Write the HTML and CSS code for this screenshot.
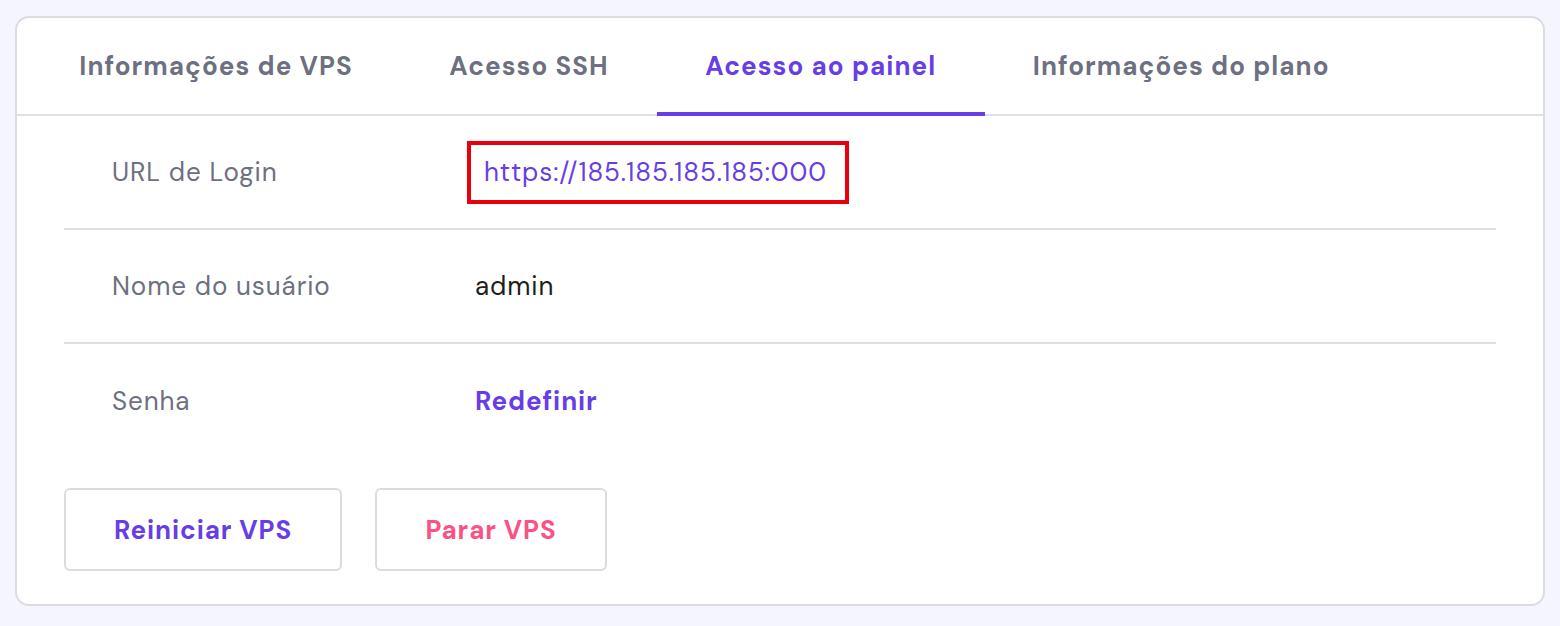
FILE: index.html
```html
<!DOCTYPE html>
<html lang="pt-BR">
<head>
<meta charset="utf-8">
<title>Acesso ao painel</title>
<link rel="stylesheet" href="styles.css">
</head>
<body>
<div class="card">
  <nav class="tabs">
    <div class="tab">Informações de VPS</div>
    <div class="tab">Acesso SSH</div>
    <div class="tab active">Acesso ao painel</div>
    <div class="tab">Informações do plano</div>
  </nav>
  <div class="content">
    <div class="row">
      <div class="label">URL de Login</div>
      <div class="value"><span class="highlight"><a class="link" href="#">https://185.185.185.185:000</a></span></div>
    </div>
    <div class="row">
      <div class="label">Nome do usuário</div>
      <div class="value plain">admin</div>
    </div>
    <div class="row last">
      <div class="label">Senha</div>
      <div class="value"><a class="action-link" href="#">Redefinir</a></div>
    </div>
    <div class="actions">
      <button class="btn btn-restart">Reiniciar VPS</button>
      <button class="btn btn-stop">Parar VPS</button>
    </div>
  </div>
</div>
</body>
</html>
```

FILE: styles.css
```css
* { box-sizing: border-box; }
html, body { margin: 0; }
body {
  background: #f4f5ff;
  padding: 16px 15px 0 15px;
  font-family: "DM Sans", Inter, "Noto Sans", sans-serif;
  -webkit-font-smoothing: antialiased;
}
.card {
  background: #fff;
  border: 2px solid #dcdde3;
  border-radius: 14px;
  height: 590px;
  overflow: hidden;
}
.tabs {
  display: flex;
  padding-left: 14px;
  height: 98px;
  border-bottom: 2px solid #e0e1e6;
}
.tab {
  padding: 0 48.3px;
  display: flex;
  align-items: center;
  font-size: 26px;
  font-weight: 700;
  color: #6d7081;
  letter-spacing: 1.05px;
  position: relative;
  height: 96px;
}
.tab.active {
  color: #673de6;
}
.tab.active::after {
  content: "";
  position: absolute;
  left: 0;
  right: 0;
  bottom: -2px;
  height: 4px;
  background: #673de6;
}
.content {
  padding: 0 47px;
}
.row {
  display: grid;
  grid-template-columns: 363px 1fr;
  align-items: center;
  height: 114px;
  padding-left: 48px;
  border-bottom: 2px solid #dedfe4;
}
.row.last { border-bottom: none; }
.label {
  font-size: 26px;
  letter-spacing: 0.9px;
  color: #6d7081;
}
.value {
  font-size: 26px;
  letter-spacing: 0.9px;
}
.plain { color: #1d1e20; }
.highlight {
  display: inline-flex;
  align-items: center;
  height: 63px;
  margin-left: -8px;
  padding: 0 18px 0 13px;
  border: 4px solid #e8000b;
}
.link {
  color: #673de6;
  text-decoration: none;
}
.action-link {
  color: #673de6;
  font-weight: 700;
  text-decoration: none;
}
.actions {
  display: flex;
  gap: 33px;
  margin-top: 30px;
}
.btn {
  height: 83px;
  background: #fff;
  border: 2px solid #dadce0;
  border-radius: 6px;
  font-family: inherit;
  font-size: 26px;
  letter-spacing: 0.9px;
  font-weight: 700;
  cursor: pointer;
  padding: 0;
}
.btn-restart { width: 278px; color: #673de6; }
.btn-stop { width: 232px; color: #fc5185; }
```
